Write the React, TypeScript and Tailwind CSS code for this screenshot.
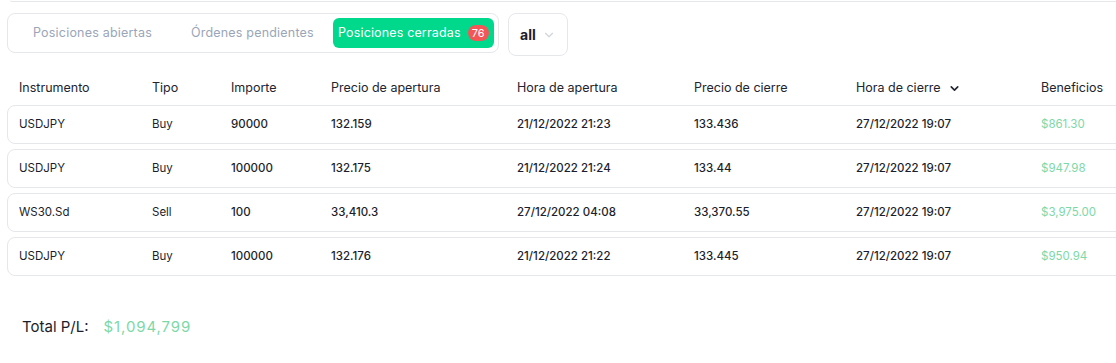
import { ChevronDown } from "lucide-react";

const rows = [
  { sym: "USDJPY", type: "Buy", amount: "90000", open: "132.159", openTime: "21/12/2022 21:23", close: "133.436", closeTime: "27/12/2022 19:07", profit: "$861.30" },
  { sym: "USDJPY", type: "Buy", amount: "100000", open: "132.175", openTime: "21/12/2022 21:24", close: "133.44", closeTime: "27/12/2022 19:07", profit: "$947.98" },
  { sym: "WS30.Sd", type: "Sell", amount: "100", open: "33,410.3", openTime: "27/12/2022 04:08", close: "33,370.55", closeTime: "27/12/2022 19:07", profit: "$3,975.00" },
  { sym: "USDJPY", type: "Buy", amount: "100000", open: "132.176", openTime: "21/12/2022 21:22", close: "133.445", closeTime: "27/12/2022 19:07", profit: "$950.94" },
];

const cols = "grid grid-cols-[133px_79px_100px_186px_177px_162px_185px_120px] items-center";

export default function App() {
  return (
    <div className="w-[1116px] h-[363px] overflow-hidden bg-white font-['Inter','Liberation_Sans',sans-serif] text-[#1b1e2c]">
      {/* end of the card above */}
      <div className="h-[2px] ml-[10px] border-b border-gray-200 rounded-bl-lg" />

      {/* Tabs + filter */}
      <div className="flex items-start gap-[9px] ml-[7px] mt-[11px]">
        <div className="flex items-center h-[40px] w-[492px] border border-gray-200 rounded-lg pl-[25px] pr-[4px] whitespace-nowrap">
          <span className="text-[12.5px] text-[#9aa6b8] tracking-[0.2px]">Posiciones abiertas</span>
          <span className="text-[12.5px] text-[#9aa6b8] ml-[39px] tracking-[0.2px]">Órdenes pendientes</span>
          <div className="ml-auto flex items-center h-[30px] w-[161px] rounded-md bg-[#00d88b] pl-[5px]">
            <span className="text-[12.5px] text-white tracking-[0.15px]">Posiciones cerradas</span>
            <span className="ml-[7px] h-[16px] px-[4px] rounded-full bg-[#f25656] text-white text-[11px] leading-[16px]">76</span>
          </div>
        </div>
        <div className="flex items-center h-[43px] w-[60px] border border-gray-200 rounded-lg pl-[11px]">
          <span className="text-[14px] font-bold">all</span>
          <ChevronDown size={14} className="ml-[6px] text-gray-300" strokeWidth={2} />
        </div>
      </div>

      {/* Table */}
      <div className="ml-[7px] mt-[21px] w-[1140px]">
        <div className={`${cols} pl-[12px] h-[23px] text-[12.5px] text-[#22252f]`}>
          <span>Instrumento</span>
          <span>Tipo</span>
          <span>Importe</span>
          <span>Precio de apertura</span>
          <span>Hora de apertura</span>
          <span>Precio de cierre</span>
          <span className="flex items-center">
            Hora de cierre
            <ChevronDown size={13} strokeWidth={3} className="ml-[7px]" />
          </span>
          <span>Beneficios</span>
        </div>
        <div className="mt-[5px] flex flex-col gap-[5px]">
          {rows.map((r, i) => (
            <div key={i} className={`${cols} pl-[11px] h-[39px] border border-gray-200 rounded-lg text-[11.5px] font-medium`}>
              <span className="font-normal">{r.sym}</span>
              <span className="font-normal">{r.type}</span>
              <span>{r.amount}</span>
              <span>{r.open}</span>
              <span>{r.openTime}</span>
              <span>{r.close}</span>
              <span>{r.closeTime}</span>
              <span className="text-[#7dd8a8] font-normal">{r.profit}</span>
            </div>
          ))}
        </div>
      </div>

      {/* Total */}
      <div className="flex items-center ml-[22px] mt-[40px] text-[15px]">
        <span className="text-[#1b1e2c]">Total P/L:</span>
        <span className="ml-[15px] text-[#7dd8a8] tracking-[0.9px]">$1,094,799</span>
      </div>
    </div>
  );
}
